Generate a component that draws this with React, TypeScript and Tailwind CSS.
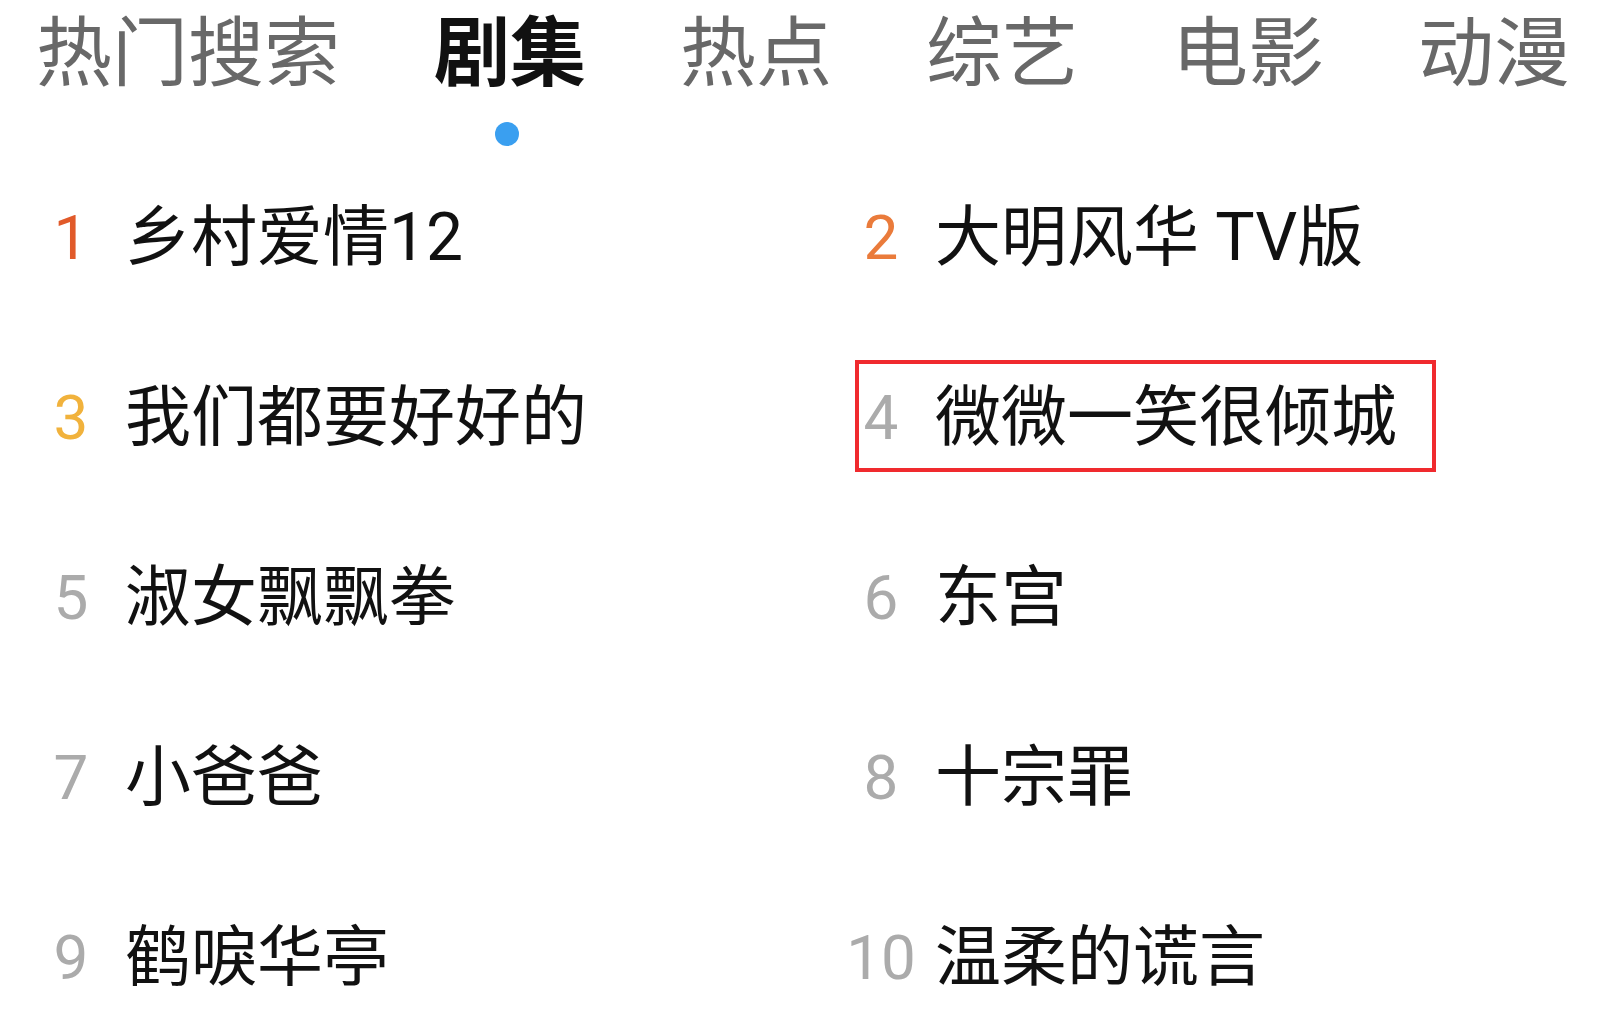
import React from "react";

const tabs = ["热门搜索", "剧集", "热点", "综艺", "电影", "动漫"];

const items = [
  "乡村爱情12",
  "大明风华 TV版",
  "我们都要好好的",
  "微微一笑很倾城",
  "淑女飘飘拳",
  "东宫",
  "小爸爸",
  "十宗罪",
  "鹤唳华亭",
  "温柔的谎言",
];

const rankColor = (i: number) => {
  if (i === 0) return "text-[#e15a2a]";
  if (i === 1) return "text-[#ea7b3b]";
  if (i === 2) return "text-[#f1b23c]";
  return "text-[#ababab]";
};

export default function App() {
  return (
    <div className="w-[1600px] h-[1025px] bg-white overflow-hidden font-['Roboto','Noto_Sans_CJK_SC',sans-serif]">
      <div className="flex h-[148px] pl-[36px] pt-[16px] gap-[94px]">
        {tabs.map((t, i) => (
          <div key={t} className="flex flex-col items-center">
            <span
              className={
                "text-[76px] leading-[76px] whitespace-nowrap " +
                (i === 1 ? "font-bold text-[#111111]" : "font-normal text-[#686868]")
              }
            >
              {t}
            </span>
            {i === 1 && (
              <span className="mt-[30px] mr-[6px] w-[24px] h-[24px] rounded-full bg-[#3a9ff0]" />
            )}
          </div>
        ))}
      </div>
      <div className="grid grid-cols-[810px_1fr] pl-[36px]">
        {items.map((name, i) => (
          <div key={name} className="relative flex items-center h-[180px]">
            <span
              className={
                "w-[70px] text-center text-[62px] leading-none font-normal " + rankColor(i)
              }
            >
              {i + 1}
            </span>
            <span className="ml-[19px] text-[66px] leading-none text-[#111111] whitespace-nowrap">
              {name}
            </span>
            {i === 3 && (
              <span className="absolute left-[9px] top-[32px] w-[581px] h-[112px] border-[4px] border-[#f02a2e]" />
            )}
          </div>
        ))}
      </div>
    </div>
  );
}
